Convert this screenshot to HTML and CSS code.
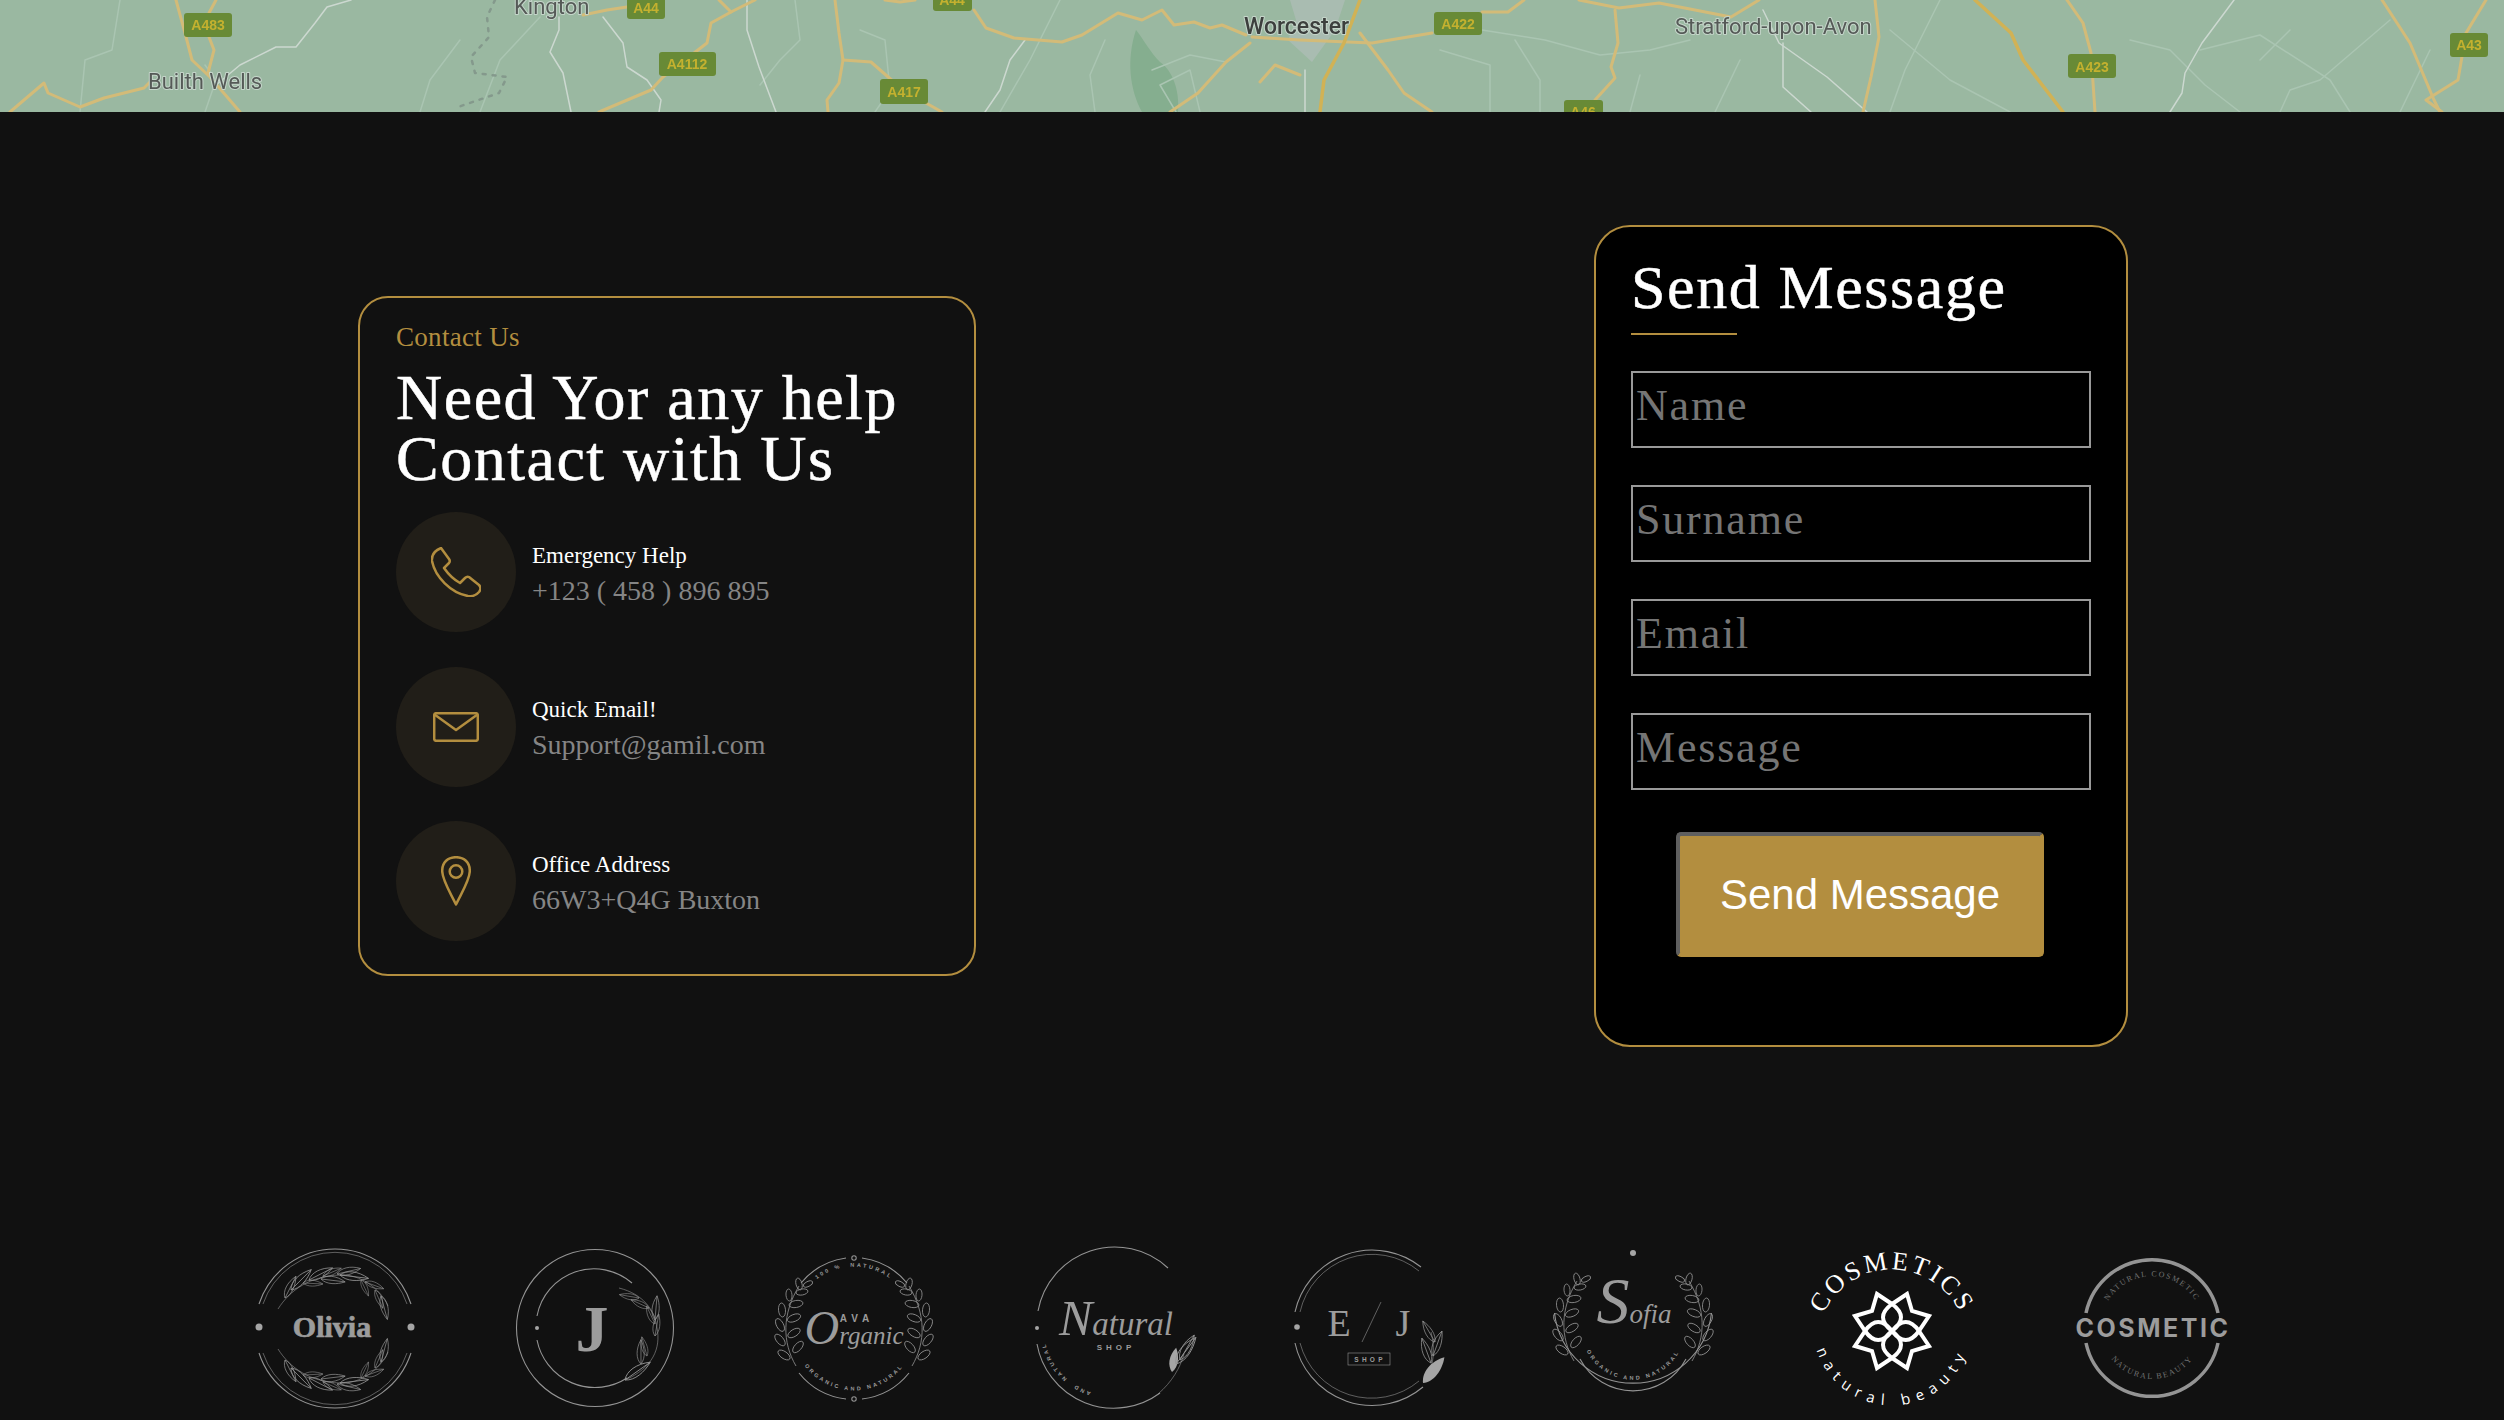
FILE: index.html
```html
<!DOCTYPE html>
<html lang="en">
<head>
  <meta charset="UTF-8">
  <title>Contact Us</title>
  <link rel="stylesheet" href="styles.css">
</head>
<body>

  <!-- map strip -->
  <div class="map">
    <svg class="map-svg" viewBox="0 0 2504 112" width="2504" height="112">
      <path class="park" d="M1136 30C1126 60 1130 90 1142 112H1178C1180 90 1172 70 1160 62C1150 52 1144 40 1136 30Z"/>
      <path class="urban" d="M1290 0H1345L1335 30L1312 62L1288 40L1296 20Z"/>

      <polyline class="minor" points="120,0 112,50 85,60 80,112"/>
      <polyline class="minor" points="205,65 216,80 205,112"/>
      <polyline class="minor" points="460,40 430,80 420,112"/>
      <polyline class="minor" points="540,17 500,60 480,112"/>
      <polyline class="minor" points="795,0 800,40 780,60 760,85"/>
      <polyline class="minor" points="860,30 885,40 890,90 875,112"/>
      <polyline class="minor" points="1060,0 1030,60 1000,112"/>
      <polyline class="minor" points="1152,70 1190,55 1226,62"/>
      <polyline class="minor" points="1105,40 1090,75 1095,112"/>
      <polyline class="minor" points="1176,112 1160,85 1190,70 1200,112"/>
      <polyline class="minor" points="1482,30 1545,40 1600,55 1650,50 1690,40"/>
      <polyline class="minor" points="1440,50 1490,65 1490,112"/>
      <polyline class="minor" points="1515,40 1540,80 1540,112"/>
      <polyline class="minor" points="1640,75 1630,112"/>
      <polyline class="minor" points="1740,60 1715,112"/>
      <polyline class="minor" points="1890,30 1950,80 2010,112"/>
      <polyline class="minor" points="1940,0 1905,70 1890,112"/>
      <polyline class="minor" points="2130,40 2170,50 2205,85 2240,112"/>
      <polyline class="minor" points="2200,50 2260,35 2330,80 2350,112"/>
      <polyline class="minor" points="2290,30 2260,60"/>
      <polyline class="minor" points="2390,20 2320,80 2290,90 2280,112"/>
      <polyline class="minor" points="2430,50 2400,112"/>

      <polyline class="white" points="351,0 327,7 315,23 296,47 276,47 240,65 216,85"/>
      <polyline class="white" points="559,17 559,30 550,52 563,73 571,112"/>
      <polyline class="white" points="603,17 623,43 627,67 647,80 661,100 659,112"/>
      <polyline class="white" points="747,0 747,30 759,67 776,112"/>
      <polyline class="white" points="1025,40 1010,60 1000,90 985,112"/>
      <polyline class="white" points="1763,10 1779,43 1827,77 1867,112"/>
      <polyline class="white" points="1783,43 1783,87 1811,112"/>
      <polyline class="white" points="2234,0 2202,43 2185,73 2182,93 2170,112"/>
      <polyline class="white" points="1305,70 1305,112"/>

      <polyline class="trail" points="495,0 487,17 489,37 471,57 475,73 507,77 499,93 455,108"/>

      <polyline class="road" points="176,0 185,33 192,60 210,77 240,112"/>
      <polyline class="road" points="216,0 209,13"/>
      <polyline class="road" points="209,37 214,50 208,73"/>
      <polyline class="road" points="10,112 44,83 48,93 80,107 104,98 144,88 152,80"/>
      <polyline class="road" points="599,112 651,90 663,77 707,43 711,23 731,12 719,0"/>
      <polyline class="road" points="731,12 755,0"/>
      <polyline class="road" points="583,15 607,10 627,7"/>
      <polyline class="road" points="835,0 839,33 843,60 839,83 827,100 828,112"/>
      <polyline class="road" points="843,60 871,62 903,90 942,112"/>
      <polyline class="road" points="885,0 900,2 915,0"/>
      <polyline class="road" points="974,10 986,28 1014,38 1062,42 1082,35 1118,13 1142,20 1162,10 1174,25 1194,22 1210,28 1222,25 1246,35"/>
      <polyline class="road" points="1250,43 1226,62 1198,93 1170,112"/>
      <polyline class="road" points="1252,37 1300,40 1372,43 1432,33"/>
      <polyline class="road" points="1360,33 1388,70 1404,93 1432,112"/>
      <polyline class="road" points="1260,82 1275,65 1300,75"/>
      <polyline class="road double" points="1360,0 1344,43 1324,80 1320,112"/>
      <polyline class="road" points="1482,12 1508,12 1524,0"/>
      <polyline class="road" points="1579,0 1619,8 1659,3 1731,17 1759,0"/>
      <polyline class="road" points="1615,10 1618,43 1611,67 1615,78 1595,100"/>
      <polyline class="road" points="1875,0 1879,37 1871,77 1863,112"/>
      <polyline class="road double" points="1975,0 2011,33 2023,60 2063,112"/>
      <polyline class="road" points="2067,0 2083,23 2091,53 2095,112"/>
      <polyline class="road" points="2382,0 2410,43 2434,100 2440,112"/>
      <polyline class="road" points="2486,0 2466,33 2458,80 2426,100 2442,112"/>

      <g class="shield">
        <rect x="184" y="13" width="48" height="24" rx="3"/><text x="208" y="30">A483</text>
        <rect x="627" y="-4" width="38" height="23" rx="3"/><text x="646" y="13">A44</text>
        <rect x="659" y="52" width="57" height="24" rx="3"/><text x="687" y="69">A4112</text>
        <rect x="880" y="79" width="48" height="25" rx="3"/><text x="904" y="97">A417</text>
        <rect x="933" y="-12" width="39" height="23" rx="3"/><text x="952" y="5">A44</text>
        <rect x="1434" y="12" width="48" height="23" rx="3"/><text x="1458" y="29">A422</text>
        <rect x="1564" y="100" width="39" height="24" rx="3"/><text x="1583" y="117">A46</text>
        <rect x="2068" y="54" width="48" height="24" rx="3"/><text x="2092" y="72">A423</text>
        <rect x="2450" y="33" width="38" height="24" rx="3"/><text x="2469" y="50">A43</text>
      </g>

      <g class="place">
        <text x="148" y="89">Builth Wells</text>
        <text x="514" y="14">Kington</text>
        <text class="city" x="1244" y="34">Worcester</text>
        <text x="1675" y="34">Stratford-upon-Avon</text>
      </g>
    </svg>
  </div>

  <main class="contact">
    <section class="info-card">
      <p class="eyebrow">Contact Us</p>
      <h2 class="info-title">Need Yor any help<br>Contact with Us</h2>

      <ul class="info-list">
        <li class="info-item">
          <span class="info-icon">
            <svg viewBox="0 0 50 50" width="50" height="50"><path d="M10 1L18 12Q19.5 14 18 16L13 21Q20 31 29 36L34 31Q36 29 38 30L48 38Q51 41 48 45Q44 50 37 49C20 46 4 30 1 14Q0 5 10 1Z"/></svg>
          </span>
          <div class="info-text">
            <h4 class="info-label">Emergency Help</h4>
            <p class="info-value">+123 ( 458 ) 896 895</p>
          </div>
        </li>
        <li class="info-item">
          <span class="info-icon">
            <svg viewBox="0 0 46 30" width="46" height="30"><rect x="1.2" y="1.2" width="43.6" height="27.6" rx="2"/><path d="M1.5 2.5L23 18L44.5 2.5"/></svg>
          </span>
          <div class="info-text">
            <h4 class="info-label">Quick Email!</h4>
            <p class="info-value">Support@gamil.com</p>
          </div>
        </li>
        <li class="info-item">
          <span class="info-icon">
            <svg viewBox="0 0 30 50" width="30" height="50"><path d="M15 48.5C9 36 1.2 24 1.2 15C1.2 6 7 1.2 15 1.2S28.8 6 28.8 15C28.8 24 21 36 15 48.5Z"/><circle cx="15" cy="15.5" r="6.3"/></svg>
          </span>
          <div class="info-text">
            <h4 class="info-label">Office Address</h4>
            <p class="info-value">66W3+Q4G Buxton</p>
          </div>
        </li>
      </ul>
    </section>

    <form class="message-card">
      <h2 class="message-title">Send Message</h2>
      <input class="field" type="text" placeholder="Name">
      <input class="field" type="text" placeholder="Surname">
      <input class="field" type="text" placeholder="Email">
      <input class="field" type="text" placeholder="Message">
      <button class="send-btn" type="button">Send Message</button>
    </form>
  </main>

  <!-- client logos -->
  <svg class="defs" width="0" height="0">
    <defs>
      <path id="leaf" class="hair" d="M0 0C4 -5 13 -6 22 -2C15 2 6 4 0 0ZM0 0L22 -2"/>
      <path id="solid-leaf" class="solid" d="M0 0C4 -6 13 -8 22 -4C15 2 6 4 0 0Z"/>
      <g id="olive-top">
        <path class="hair" d="M-57 -19C-45 -38 -25 -52 5 -53C25 -54 45 -40 53 -22"/>
        <use href="#leaf" transform="translate(-50 -30) rotate(-58) scale(1.1)"/>
        <use href="#leaf" transform="translate(-44 -38) rotate(-40) scale(1.3)"/>
        <use href="#leaf" transform="translate(-32 -45) rotate(8) scale(.9)"/>
        <use href="#leaf" transform="translate(-26 -48) rotate(-22) scale(1.2)"/>
        <use href="#leaf" transform="translate(-12 -52) rotate(-18) scale(.9)"/>
        <use href="#leaf" transform="translate(-14 -49) rotate(12) scale(1.1)"/>
        <use href="#leaf" transform="translate(2 -54) rotate(-8) scale(1.1)"/>
        <use href="#leaf" transform="translate(5 -53) rotate(12) scale(1.3)"/>
        <use href="#leaf" transform="translate(26 -48) rotate(70) scale(.8)"/>
        <use href="#leaf" transform="translate(30 -46) rotate(25) scale(.9)"/>
        <use href="#leaf" transform="translate(40 -38) rotate(72) scale(.9)"/>
        <use href="#leaf" transform="translate(46 -32) rotate(80) scale(1.1)"/>
      </g>
      <g id="laurel" class="fine">
        <path d="M-58 38C-72 14 -72 -14 -55 -42"/>
        <ellipse cx="-70" cy="27" rx="7" ry="3.5" transform="rotate(35 -70 27)"/>
        <ellipse cx="-56" cy="19" rx="7" ry="3.5" transform="rotate(-48 -56 19)"/>
        <ellipse cx="-74" cy="12" rx="7" ry="3.5" transform="rotate(50 -74 12)"/>
        <ellipse cx="-60" cy="5" rx="7" ry="3.5" transform="rotate(-32 -60 5)"/>
        <ellipse cx="-74" cy="-3" rx="7" ry="3.5" transform="rotate(62 -74 -3)"/>
        <ellipse cx="-60" cy="-10" rx="7" ry="3.5" transform="rotate(-22 -60 -10)"/>
        <ellipse cx="-72" cy="-18" rx="7" ry="3.5" transform="rotate(85 -72 -18)"/>
        <ellipse cx="-58" cy="-24" rx="7" ry="3.5" transform="rotate(-10 -58 -24)"/>
        <ellipse cx="-65" cy="-33" rx="6" ry="3" transform="rotate(85 -65 -33)"/>
        <ellipse cx="-52" cy="-36" rx="6" ry="3" transform="rotate(-10 -52 -36)"/>
        <ellipse cx="-55" cy="-44" rx="6" ry="3" transform="rotate(75 -55 -44)"/>
        <ellipse cx="-46" cy="-44" rx="5" ry="2.5" transform="rotate(-25 -46 -44)"/>
      </g>
      <path id="t3-top" d="M-48 -38A61 61 0 0 1 48 -38"/>
      <path id="t3-bot" d="M-56 27A62 62 0 0 0 56 27"/>
      <path id="t4-arc" d="M-15 66A68 68 0 1 1 20 -65"/>
      <path id="t6-bot" d="M-47 22A52 52 0 0 0 47 22"/>
      <path id="t7-top" d="M-68 -15A75 75 0 0 1 68 -15"/>
      <path id="t7-bot" d="M-76 20A79 79 0 0 0 76 20"/>
      <path id="t8-top" d="M-48 -18A51 51 0 0 1 48 -18"/>
      <path id="t8-bot" d="M-46 22A51 51 0 0 0 46 22"/>
    </defs>
  </svg>

  <div class="logos">
    <!-- Olivia -->
    <svg class="logo" viewBox="-80 -80 160 160">
      <path d="M-76 -24A80 80 0 0 1 76 -24"/>
      <path class="hair" d="M-72 -24A76 76 0 0 1 72 -24"/>
      <path d="M-76 25A80 80 0 0 0 76 25"/>
      <path class="hair" d="M-72 25A76 76 0 0 0 72 25"/>
      <use href="#olive-top"/>
      <use href="#olive-top" transform="translate(0 2) scale(1 -1)"/>
      <circle class="dot" cx="-76" cy="-1" r="3.5"/>
      <circle class="dot" cx="76" cy="-1" r="3.5"/>
      <text class="serif bold heavy" x="-3" y="9" font-size="30">Olivia</text>
    </svg>

    <!-- J -->
    <svg class="logo" viewBox="-80 -80 160 160">
      <circle cx="0" cy="0" r="78.5"/>
      <path d="M37 -45A58 58 0 0 0 -58 -12"/>
      <path d="M-58 12A59 59 0 0 0 32 50"/>
      <circle class="dot" cx="-58" cy="0" r="2"/>
      <path class="hair" d="M30 52C58 40 66 20 62 0C60 -18 48 -34 24 -40"/>
      <use href="#leaf" transform="translate(30 52) rotate(-30) scale(1.4)"/>
      <use href="#leaf" transform="translate(46 36) rotate(-85) scale(1.1)"/>
      <use href="#leaf" transform="translate(52 28) rotate(-100) scale(.9)"/>
      <use href="#leaf" transform="translate(60 8) rotate(-75)"/>
      <use href="#leaf" transform="translate(60 -4) rotate(-110) scale(.9)"/>
      <use href="#leaf" transform="translate(60 -8) rotate(-80) scale(1.1)"/>
      <use href="#leaf" transform="translate(54 -20) rotate(-150) scale(.9)"/>
      <use href="#leaf" transform="translate(44 -30) rotate(-165) scale(.9)"/>
      <text class="serif bold" x="-3" y="23" font-size="66">J</text>
    </svg>

    <!-- Ava Organic -->
    <svg class="logo" viewBox="-80 -80 160 160">
      <path d="M-53 -45A71 71 0 0 1 -8 -70"/>
      <path d="M8 -70A71 71 0 0 1 53 -45"/>
      <path d="M-55 45A71 71 0 0 0 -8 71"/>
      <path d="M8 71A71 71 0 0 0 55 45"/>
      <circle cx="0" cy="-70" r="2.2"/>
      <circle cx="0" cy="71" r="2.2"/>
      <use href="#laurel"/>
      <use href="#laurel" transform="scale(-1 1)"/>
      <text class="tiny"><textPath href="#t3-top" startOffset="50%">100 %  NATURAL</textPath></text>
      <text class="tiny"><textPath href="#t3-bot" startOffset="50%">ORGANIC AND NATURAL</textPath></text>
      <text class="spaced" x="3" y="-6" font-size="10">AVA</text>
      <text class="script" x="0" y="16" font-size="25"><tspan font-size="48">O</tspan>rganic</text>
    </svg>

    <!-- Natural shop -->
    <svg class="logo" viewBox="-80 -80 160 160">
      <path d="M-76 -17A78 78 0 0 1 54 -60"/>
      <path d="M-77 16A78 78 0 0 0 46 65"/>
      <circle class="dot" cx="-77" cy="0" r="2"/>
      <text class="tiny"><textPath href="#t4-arc">100 %  ORGANIC  AND  NATURAL</textPath></text>
      <text class="script" x="2" y="7" font-size="33"><tspan font-size="50">N</tspan>atural</text>
      <text class="spaced" x="2" y="22" font-size="8">SHOP</text>
      <path class="hair" d="M44 66C58 54 66 40 70 26"/>
      <use href="#solid-leaf" transform="translate(58 44) rotate(-70) scale(1.1)"/>
      <use href="#leaf" transform="translate(62 36) rotate(-48) scale(1.5)"/>
      <use href="#leaf" transform="translate(66 32) rotate(-55) scale(1.3)"/>
    </svg>

    <!-- E / J -->
    <svg class="logo" viewBox="-80 -80 160 160">
      <path d="M-78 -16A79 79 0 0 1 48 -61"/>
      <path class="hair" d="M-73 -16A74 74 0 0 1 46 -57"/>
      <path d="M-78 15A79 79 0 0 0 50 59"/>
      <path class="hair" d="M-73 15A74 74 0 0 0 46 53"/>
      <circle class="dot" cx="-76" cy="-1" r="2.8"/>
      <text class="serif" x="-34" y="8" font-size="38">E</text>
      <path class="hair" d="M8 -26L-11 14"/>
      <text class="serif" x="30" y="8" font-size="38">J</text>
      <rect class="hair" x="-25" y="25" width="42" height="12"/>
      <text class="spaced" x="-3" y="34" font-size="6.5">SHOP</text>
      <path class="hair" d="M50 54C62 40 62 20 58 4"/>
      <use href="#solid-leaf" transform="translate(50 55) rotate(-40) scale(1.5)"/>
      <use href="#leaf" transform="translate(58 35) rotate(-105) scale(1.2)"/>
      <use href="#leaf" transform="translate(60 28) rotate(-65) scale(1.2)"/>
      <use href="#leaf" transform="translate(62 14) rotate(-115) scale(1.1)"/>
    </svg>

    <!-- Sofia -->
    <svg class="logo" viewBox="-80 -80 160 160">
      <circle class="dot" cx="0" cy="-75" r="3"/>
      <path d="M-78.5 -15A79 79 0 0 0 78.5 -15"/>
      <path d="M-53 31A60 60 0 0 0 53 31"/>
      <use href="#laurel" transform="translate(-1 -5)"/>
      <use href="#laurel" transform="translate(1 -5) scale(-1 1)"/>
      <text class="tiny"><textPath href="#t6-bot" startOffset="50%">ORGANIC AND NATURAL</textPath></text>
      <text class="script" x="1" y="-5" font-size="27"><tspan font-size="66">S</tspan>ofia</text>
    </svg>

    <!-- Cosmetics flower -->
    <svg class="logo bright" viewBox="-80 -80 160 160">
      <text class="arc-serif" font-size="26"><textPath href="#t7-top" startOffset="50%">COSMETICS</textPath></text>
      <text class="arc-sans" font-size="15"><textPath href="#t7-bot" startOffset="50%">natural beauty</textPath></text>
      <g class="flower" transform="translate(0 3)">
        <path d="M15 -37L0 -27L-15 -37L-20 -20L-37 -15L-27 0L-37 15L-20 20L-15 37L0 27L15 37L20 20L37 15L27 0L37 -15L20 -20Z"/>
        <path d="M0 0Q18 -14 0 -27Q-18 -14 0 0Z"/>
        <path d="M0 0Q14 18 27 0Q14 -18 0 0Z"/>
        <path d="M0 0Q18 14 0 27Q-18 14 0 0Z"/>
        <path d="M0 0Q-14 18 -27 0Q-14 -18 0 0Z"/>
      </g>
    </svg>

    <!-- Cosmetic stamp -->
    <svg class="logo" viewBox="-80 -80 160 160">
      <path class="thick" d="M-66 -15A67.5 67.5 0 0 1 66 -15"/>
      <path class="thick" d="M-66 15A67.5 67.5 0 0 0 66 15"/>
      <text class="tiny-serif"><textPath href="#t8-top" startOffset="50%">NATURAL COSMETIC</textPath></text>
      <text class="tiny-serif"><textPath href="#t8-bot" startOffset="50%">NATURAL BEAUTY</textPath></text>
      <text class="stamp" x="1" y="9" font-size="25">COSMETIC</text>
    </svg>
  </div>

</body>
</html>
```

FILE: styles.css
```css
* {
  box-sizing: border-box;
}

body {
  margin: 0;
  background: #111111;
  font-family: "Liberation Serif", serif;
  height: 1420px;
  overflow: hidden;
}

/* map */
.map {
  height: 112px;
  background: #9ab8a1;
  overflow: hidden;
}

.map-svg {
  display: block;
  fill: none;
  stroke-linejoin: round;
  stroke-linecap: round;
  filter: blur(.5px);
}

.park {
  fill: #85ae8f;
}

.urban {
  fill: #a9bcb1;
}

.road {
  stroke: #d3bb78;
  stroke-width: 3;
}

.road.double {
  stroke: #d1b255;
  stroke-width: 3.5;
}

.minor {
  stroke: #aac5b2;
  stroke-width: 1.5;
}

.white {
  stroke: #ccd8d0;
  stroke-width: 1.5;
}

.trail {
  stroke: #84998c;
  stroke-width: 2.5;
  stroke-dasharray: 3 7;
}

.shield rect {
  fill: #688a36;
}

.shield text {
  fill: #c4b12f;
  font: 700 14px "Liberation Sans", sans-serif;
  text-anchor: middle;
}

.place text {
  fill: #555a57;
  stroke: #c5d5ca;
  stroke-width: 2px;
  paint-order: stroke;
  font: 22px "Roboto", sans-serif;
}

.place .city {
  fill: #3c3f3d;
  font-size: 23px;
  font-weight: 500;
}

/* contact row */
.contact {
  display: flex;
  justify-content: space-between;
  align-items: center;
  padding: 113px 376px 201px 358px;
}

.info-card {
  width: 618px;
  height: 680px;
  padding: 24px 36px 0;
  background: #111111;
  border: 2px solid #b38e3f;
  border-radius: 30px;
}

.eyebrow {
  margin: 0;
  color: #b38e3f;
  font-size: 27px;
  line-height: 31px;
  letter-spacing: .3px;
}

.info-title {
  margin: 14px 0 23px;
  color: #ffffff;
  font-size: 64px;
  font-weight: 400;
  line-height: 61px;
  letter-spacing: 1.5px;
  -webkit-text-stroke: .5px #ffffff;
}

.info-list {
  list-style: none;
  margin: 0;
  padding: 0;
  display: flex;
  flex-direction: column;
  gap: 34.5px;
}

.info-item {
  display: flex;
  align-items: center;
  gap: 16px;
}

.info-icon {
  width: 120px;
  height: 120px;
  border-radius: 50%;
  background: #211e18;
  display: flex;
  align-items: center;
  justify-content: center;
}

.info-icon svg {
  fill: none;
  stroke: #b38e3f;
  stroke-width: 2.5;
  stroke-linejoin: round;
}

.info-text {
  padding-top: 4px;
}

.info-label {
  margin: 0 0 5px;
  color: #ffffff;
  font-size: 23px;
  font-weight: 400;
  line-height: 28px;
}

.info-value {
  margin: 0;
  color: #858585;
  font-size: 28px;
  line-height: 32px;
}

/* form */
.message-card {
  width: 534px;
  height: 822px;
  padding: 24px 35px 0;
  background: #000000;
  border: 2px solid #b38e3f;
  border-radius: 36px;
  display: flex;
  flex-direction: column;
}

.message-title {
  margin: 0 0 -1px;
  padding: 1px 0 11px;
  color: #ffffff;
  font-size: 62px;
  font-weight: 400;
  line-height: 70px;
  letter-spacing: 1.6px;
  -webkit-text-stroke: .5px #ffffff;
  border-bottom: 2px solid #b38e3f;
  width: 106px;
  white-space: nowrap;
}

.field {
  display: block;
  width: 460px;
  height: 77px;
  margin-top: 37px;
  padding: 0 3px 8px;
  background: #000000;
  border: 2px solid #999999;
  font-family: "Liberation Serif", serif;
  font-size: 44px;
}

.field::placeholder {
  letter-spacing: 1.8px;
}

.send-btn {
  align-self: center;
  width: 368px;
  height: 125px;
  margin: 42px 2px 0 0;
  background: #b38e3f;
  border-style: solid;
  border-width: 4px;
  border-color: #5f5f5f #b38e3f #b38e3f #5f5f5f;
  border-radius: 5px;
  color: #ffffff;
  font-family: "Liberation Sans", sans-serif;
  font-size: 42px;
}

/* logos */
.defs {
  position: absolute;
}

.logos {
  display: flex;
  gap: 99.5px;
  padding-left: 255px;
}

.logo {
  width: 160px;
  height: 160px;
  flex: none;
  overflow: visible;
  fill: none;
  stroke: #949494;
  stroke-width: 1.1;
}

.logo text {
  fill: #9c9c9c;
  stroke: none;
  text-anchor: middle;
}

.hair {
  stroke-width: .6;
}

.fine {
  stroke-width: .8;
}

.thick {
  stroke-width: 3.5;
}

.dot,
.solid {
  fill: #a5a5a5;
  stroke: none;
}

.logo .serif {
  font-family: "Liberation Serif", serif;
}

.logo .bold {
  font-weight: 700;
}

.logo .heavy {
  stroke: #9c9c9c;
  stroke-width: .7;
}

.logo .tiny {
  font: 700 5.5px "Liberation Sans", sans-serif;
  letter-spacing: 2.5px;
  white-space: pre;
}

.logo .spaced {
  font-family: "Liberation Sans", sans-serif;
  font-weight: 700;
  letter-spacing: .5em;
}

.logo .script {
  font-family: "Liberation Serif", serif;
  font-style: italic;
}

.logo .tiny-serif {
  fill: #737373;
  font: 8px "Liberation Serif", serif;
  letter-spacing: 1.6px;
}

.logo .stamp {
  font-family: "Inter", sans-serif;
  font-weight: 700;
  letter-spacing: 2.5px;
}

.bright text {
  fill: #ffffff;
}

.logo .arc-serif {
  fill: #ffffff;
  font-family: "Liberation Serif", serif;
  letter-spacing: 3px;
}

.logo .arc-sans {
  fill: #ffffff;
  font-family: "Open Sans", sans-serif;
  letter-spacing: 7px;
}

.flower path {
  stroke: #ffffff;
  stroke-width: 4;
  stroke-linejoin: miter;
}
```
